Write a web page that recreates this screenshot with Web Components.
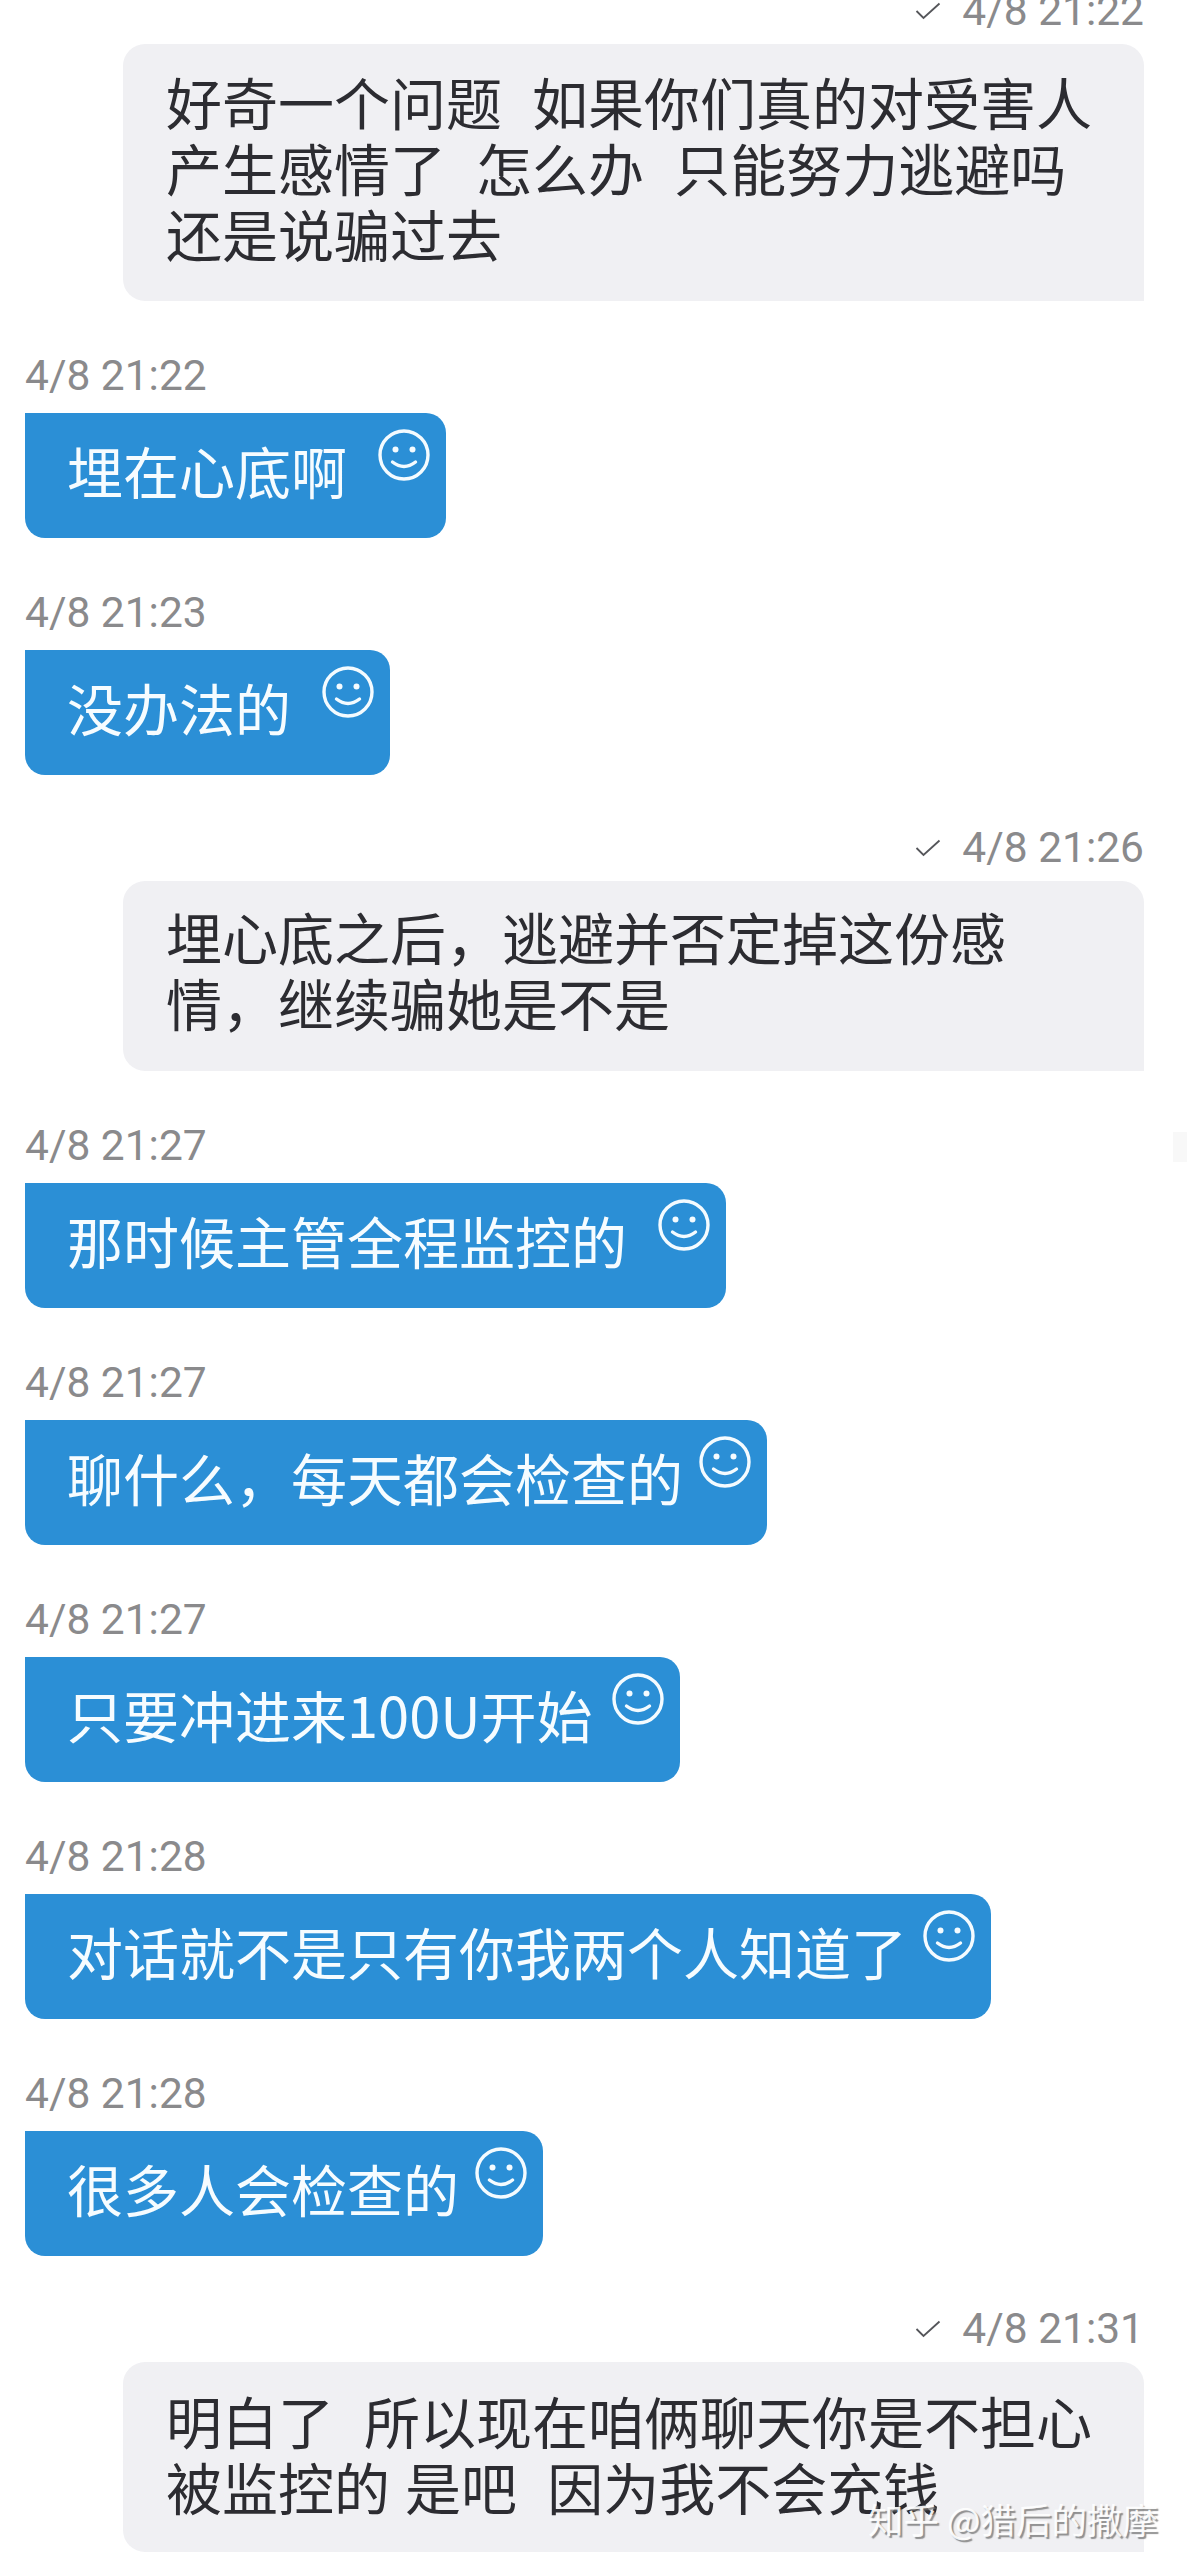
<!DOCTYPE html>
<html lang="zh"><head><meta charset="utf-8"><title>Chat</title>
<style>
html,body{margin:0;padding:0;background:#fff;height:2568px;overflow:hidden}
body{font-family:"Noto Sans CJK SC","Noto Sans",sans-serif}
</style></head><body>
<chat-thread>
<out-message time="4/8 21:22" style="margin-top:-14px;--pt:24px;--pb:35px">好奇一个问题  如果你们真的对受害人<br>产生感情了  怎么办  只能努力逃避吗<br>还是说骗过去</out-message>
<in-message time="4/8 21:22" gap="31">埋在心底啊</in-message>
<in-message time="4/8 21:23" gap="31">没办法的</in-message>
<out-message time="4/8 21:26" style="--pt:22px;--pb:36px">埋心底之后，逃避并否定掉这份感<br>情，继续骗她是不是</out-message>
<in-message time="4/8 21:27" gap="31">那时候主管全程监控的</in-message>
<in-message time="4/8 21:27" gap="16">聊什么，每天都会检查的</in-message>
<in-message time="4/8 21:27" gap="19.5">只要冲进来100U开始</in-message>
<in-message time="4/8 21:28" gap="16">对话就不是只有你我两个人知道了</in-message>
<in-message time="4/8 21:28" gap="16">很多人会检查的</in-message>
<out-message time="4/8 21:31" style="--pt:25px;--pb:33px">明白了  所以现在咱俩聊天你是不担心<br>被监控的 是吧  因为我不会充钱</out-message>
<edge-smudge></edge-smudge>
<zhihu-mark>知乎 @猎后的撒摩</zhihu-mark>
</chat-thread>
<script>
function define(name, html, extra){
  const t=document.createElement('template');t.innerHTML=html;
  customElements.define(name,class extends HTMLElement{
    constructor(){super();this.attachShadow({mode:'open'}).appendChild(t.content.cloneNode(true));}
    connectedCallback(){if(extra)extra(this);}
  });
}
define('chat-thread',`<style>:host{display:block;position:relative;width:1187px;height:2568px;overflow:hidden;background:#fff}</style><slot></slot>`);
define('msg-time',`<style>:host{display:flex;align-items:center;height:50px;font:400 42.5px/50px Roboto,"Noto Sans",sans-serif;color:#8a8a8c;white-space:nowrap}</style><slot name="tick"></slot><slot></slot>`);
define('check-icon',`<style>:host{display:block;width:26px;height:18px;margin-right:21px}svg{display:block}</style><svg width="26" height="18" viewBox="0 0 26 18"><path d="M1.5 9 L8.5 16 L24.5 1.5" fill="none" stroke="#55565a" stroke-width="1.8"/></svg>`);
define('smiley-icon',`<style>:host{display:block;width:52px;height:52px;flex:none}svg{display:block}</style><svg width="52" height="52" viewBox="0 0 52 52"><circle cx="26" cy="26" r="24" fill="none" stroke="#f4fbff" stroke-width="3.4"/><circle cx="17.5" cy="20.5" r="3" fill="#f4fbff"/><circle cx="34.5" cy="20.5" r="3" fill="#f4fbff"/><path d="M14.5 33 Q26 42 37.5 33" fill="none" stroke="#f4fbff" stroke-width="3.4" stroke-linecap="round"/></svg>`);
define('in-message',`<style>
:host{display:block;margin:50px 0 0 25px}
.b{display:inline-flex;align-items:flex-start;height:125px;margin-top:12px;box-sizing:border-box;padding:0 16px 0 42px;background:#2b8fd6;color:#f6fcff;border-radius:0 20px 20px 20px;font-size:56px;line-height:125px;white-space:nowrap}
.t{display:block;margin-top:-6px}
smiley-icon{margin-top:16px;margin-left:var(--gap,30px)}
</style><msg-time></msg-time><div class="b"><span class="t"><slot></slot></span><smiley-icon></smiley-icon></div>`,
el=>{el.shadowRoot.querySelector('msg-time').textContent=el.getAttribute('time');el.style.setProperty('--gap',el.getAttribute('gap')+'px');});
define('out-message',`<style>
:host{display:block;margin:48px 43px 0 123px}
.h{display:flex;justify-content:flex-end}
.b{margin-top:8px;box-sizing:border-box;padding:var(--pt,26px) 10px var(--pb,32px) 43px;background:#f0f0f3;color:#2c2c31;border-radius:22px 22px 0 22px;font-size:56px;line-height:66px;white-space:pre;word-spacing:2.5px}
</style><div class="h"><msg-time><check-icon slot="tick"></check-icon></msg-time></div><div class="b"><slot></slot></div>`,
el=>{const m=el.shadowRoot.querySelector('msg-time');m.appendChild(document.createTextNode(el.getAttribute('time')));});
define('edge-smudge',`<style>:host{display:block;position:absolute;left:1173px;top:1132px;width:14px;height:30px;background:#f8f8f8}</style>`);
define('zhihu-mark',`<style>:host{display:block;position:absolute;left:868px;top:2497px;font-size:35.5px;line-height:44px;color:rgba(255,255,255,.92);text-shadow:2px 2px 1px rgba(110,110,110,.75);white-space:nowrap}</style><slot></slot>`);
</script>
</body></html>
